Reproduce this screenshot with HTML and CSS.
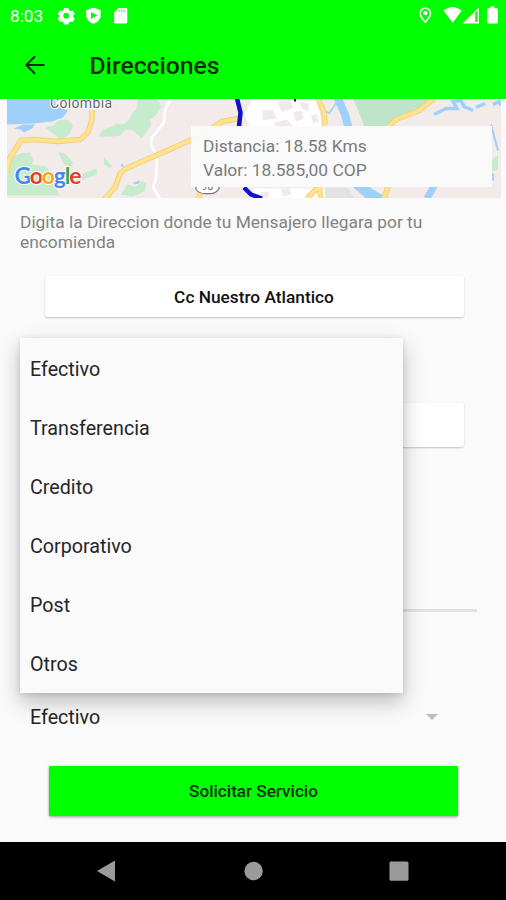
FILE: index.html
```html
<!DOCTYPE html>
<html lang="es">
<head>
<meta charset="utf-8">
<title>Direcciones</title>
<link rel="stylesheet" href="styles.css">
</head>
<body>
<div class="screen">
  <header class="top">
    <div class="status">
      <span class="clock">8:03</span>
      <svg class="status-left" width="72" height="18" viewBox="57 7 72 18" fill="#fff">
        <path fill-rule="evenodd" d="M64 8h4.400l.6 2.200 1.500.9 2.300-.7 2 3.500-1.500 1.600v1.500l1.500 1.600-2 3.500-2.300-.7-1.500.9-.6 2.100H64l-.6-2.100-1.500-.9-2.200.7-2-3.500 1.500-1.600v-1.500l-1.500-1.600 2-3.500 2.200.7 1.500-.9zM66.200 12.800a2.900 2.900 0 1 0 0 5.800 2.900 2.900 0 0 0 0-5.800z"/>
        <path fill-rule="evenodd" d="M93.400 7.400l7.300 2.800v5c0 4-3 7-7.300 8.600-4.300-1.600-7.300-4.600-7.300-8.600v-5zM91 12v7l6.500-3.700z"/>
        <path fill-rule="evenodd" d="M118.500 8h7.500q1.300 0 1.300 1.300v12.800q0 1.300-1.300 1.300h-10.700q-1.300 0-1.300-1.300v-9.600zM118.500 10v1.600h1.100v-1.600zm2.600 0v1.600h1.100v-1.600zm2.600 0v1.600h1.100v-1.600z"/>
      </svg>
      <svg class="status-right" width="84" height="20" viewBox="417 5 84 20" fill="#fff">
        <path fill-rule="evenodd" d="M425.300 7.300a6 6 0 0 1 6 6c0 3.600-3 6.800-6 10.200-3-3.400-6-6.600-6-10.200a6 6 0 0 1 6-6zm0 1.700a4.300 4.300 0 0 0-4.300 4.300c0 2.400 1.900 4.700 4.300 7.600 2.400-2.900 4.300-5.200 4.300-7.600a4.300 4.300 0 0 0-4.300-4.300z"/>
        <circle cx="425.300" cy="13.100" r="2.200"/>
        <path d="M443.500 10.800q9-7.600 18.200 0L452.700 22.700z"/>
        <path fill-rule="evenodd" d="M479 7.500v16h-16.500zM475.300 12.700v9.300h2.300V10.300z"/>
        <path d="M490.300 6.500h4.200v1.800h2.300q1.100 0 1.100 1.100v13q0 1.100-1.100 1.100h-8.600q-1.100 0-1.100-1.100v-13q0-1.100 1.100-1.100h2.100z"/>
      </svg>
    </div>
    <div class="appbar">
      <svg class="back" width="22" height="20" viewBox="0 0 22 20" fill="none" stroke="#042f04" stroke-width="2"><path d="M20.500 10H3M11 1.300L2.300 10l8.700 8.700"/></svg>
      <h1>Direcciones</h1>
    </div>
  </header>

  <main>
    <section class="map">
      <svg width="494" height="99" viewBox="7 98.500 494 99">
        <rect x="7" y="98" width="494" height="100" fill="#f2ebea"/>
        <path fill="#9fd0fa" d="M7 98h48l1 8 12 4-5 7-11 4-19 2-26 1z"/>
        <path fill="#9fd0fa" d="M14 128l9-4 12 0-3 4-8 4-4-3zM133 182l7-2-1 3-5 1zM120 165l3-2 1 4z"/>
        <g fill="#c7ebcd">
          <path d="M45 127l8-2 5-5 10-1 5 6-4 9-9 6-4-5z"/>
          <path d="M99 136l4-7 9-3 5-3 6 1 6-4 3-7 4-4 2-11h18l6 8-8 11-4 2 1 6-9 13-9-8-7-1-6 6-7 1z"/>
          <path d="M12 156l8-3 10-1 3 7-1 5 14 2 8 9 8 6-6 6 4 8H7v-34zM58 151l8 3 7 8-2 5-7-3zM75 176l22-8v6l-12 4-8 6zM104 156l8 10-1 2-7-4zM121 194l6-10 9 2 6-6 4 3-1 8-13 5z"/>
          <path fill="#bee5c7" d="M353 98h84l-43 23-1 6h-28l-6-15z"/>
          <path d="M491 159l7-4v14l-5 2-3-5z"/>
        </g>
        <path fill="#fff" d="M253 98h64l5 27-70 4-8-15zM253 188h70l8 10h-74z"/>
        <g fill="#f0eae9"><path d="M262 110l11-1 4 9-14 2zM278 101l13-1 2 8-12 3zM293 112l8-2 3 8-8 3zM274 122l13-3 7 8h-17zM299 101l9 2 1 8-7-3zM281 189l9-1 1 6-8 2zM260 192l10-1-2 6-6 1zM311 115l6-2 2 8-6 2z"/></g>
        <path fill="#e3e1e1" d="M325 187h22l9 12h-31z"/>
        <path fill="none" stroke="#fff" stroke-width="2.500" d="M171 98l-6 12-1 12-12 15-1 7 6 12-1 22-3 9 7 11"/>
        <g fill="none" stroke="#9fd0fa">
          <path stroke-width="8" d="M337 96l8 18 4 15"/>
          <path stroke-width="11" d="M357 183l12 10 12 7"/>
          <path stroke-width="7" d="M435 184l-8 14"/>
          <path stroke-width="1.500" d="M336 103l-7 10M326 111l4 2"/>
          <path stroke-width="3.500" d="M434 114l12-6 11 0-4-7 8-1 3 6 9 4M476 107l9-4M493 104l6-3 2 4"/>
          <path stroke-width="2" d="M491 124l7 26M493 173v7"/>
        </g>
        <g fill="none" stroke-linejoin="round">
          <g stroke="#f0cf78" stroke-width="5.500">
            <path d="M7 172l2-13 12-19 13-1 24 2 22-2 8-7 4-13v-9"/>
            <path d="M104 199l11-12 5-14 6-5 32-14 41-18 23-15 17-3M318 98l6 14 1 13M388 126l8-7 23-9 15-12M307 198l12-12 2 12M388 186l-4 12M198 198l4-9"/>
          </g>
          <g stroke="#ffe390" stroke-width="3.600">
            <path d="M7 172l2-13 12-19 13-1 24 2 22-2 8-7 4-13v-9"/>
            <path d="M104 199l11-12 5-14 6-5 32-14 41-18 23-15 17-3M318 98l6 14 1 13M388 126l8-7 23-9 15-12M307 198l12-12 2 12M388 186l-4 12M198 198l4-9"/>
          </g>
          <path stroke="#1111c9" stroke-width="4.500" d="M237 98l3.500 14-1.500 14M244 187l7 7 11 4"/>
        </g>
        <path d="M196 184v5q4 5 12 4 8 1 11-5v-4z" fill="#fff" stroke="#777" stroke-width="1.200"/>
        <text x="201" y="189" class="route">90</text>
        <path d="M294 98h2v3h-2z" fill="#111"/>
        <text x="50" y="107" class="city" textLength="62">Colombia</text>
        <text x="14.500" y="183.500" class="google" textLength="67"><tspan fill="#4285f4">G</tspan><tspan fill="#e53c30">o</tspan><tspan fill="#f4a814">o</tspan><tspan fill="#4285f4">g</tspan><tspan fill="#34a853">l</tspan><tspan fill="#e53c30">e</tspan></text>
      </svg>
      <div class="fare"><p class="dist">Distancia: 18.58 Kms</p><p class="cost">Valor: 18.585,00 COP</p></div>
    </section>

    <p class="hint">Digita la Direccion donde tu Mensajero llegara por tu encomienda</p>
    <button class="field place">Cc Nuestro Atlantico</button>
    <div class="field second"></div>
    <div class="rule"></div>

    <div class="spinner">
      <span class="item">Efectivo</span><i class="caret"></i>
      <ul class="menu">
        <li class="item">Efectivo</li>
        <li class="item">Transferencia</li>
        <li class="item">Credito</li>
        <li class="item">Corporativo</li>
        <li class="item">Post</li>
        <li class="item">Otros</li>
      </ul>
    </div>
    <button class="submit">Solicitar Servicio</button>
  </main>

  <nav class="nav">
    <svg width="506" height="58" viewBox="0 842 506 58" fill="#9b9b9b">
      <path d="M97 871l18-10.500v21z"/><circle cx="253.600" cy="871" r="9.200"/><rect x="389.500" y="861.500" width="19" height="19.300" rx="1.500"/>
    </svg>
  </nav>
</div>
</body>
</html>
```
FILE: styles.css
```css
* { box-sizing: border-box; margin: 0; padding: 0; }
body { font-family: Roboto, "Liberation Sans", sans-serif; background: #fafafa; }
.screen { width: 506px; height: 900px; display: flex; flex-direction: column; overflow: hidden; background: #fafafa; }

.top { height: 99px; flex: none; background: #00ff00; }
.status { height: 32px; display: flex; align-items: center; padding: 0 5px 0 10px; }
.clock { width: 47px; font-size: 17.2px; line-height: 32px; color: #fff; }
.status-right { margin-left: auto; margin-top: -2px; }
.appbar { height: 66px; display: flex; align-items: center; padding-left: 24px; }
.back { margin-right: 43.5px; }
h1 { font-size: 24.7px; font-weight: 500; line-height: 67px; color: #042f04; }

main { flex: 1; display: flex; flex-direction: column; }
.map { position: relative; width: 494px; height: 99px; margin-left: 7px; }
.map svg { display: block; }
.city { font-size: 14px; fill: #666; stroke: #fff; stroke-width: 2px; paint-order: stroke; }
.google { font-family: Lato, sans-serif; font-size: 23px; font-weight: 700; stroke: #fff; stroke-width: 2px; paint-order: stroke; }
.route { font-size: 11px; fill: #666; }
.fare { position: absolute; left: 184px; top: 27px; width: 301px; height: 61px; padding: 8px 12px; background: rgba(250, 250, 250, .97); color: #7a7a7a; font-size: 17.4px; line-height: 24px; white-space: nowrap; }

.hint { margin: 14px 20px 0; width: 430px; color: #828282; font-size: 17.35px; line-height: 20px; }
.field { width: 419px; margin-left: 44.5px; border: 0; border-radius: 3px; background: #fff; box-shadow: 0 1px 2px rgba(0, 0, 0, .22); }
.place { height: 41px; margin-top: 24px; padding-top: 1px; font: 500 17.3px/41px Roboto, sans-serif; color: #111; }
.second { height: 44px; margin-top: 86px; }
.rule { height: 3px; margin: 162px 29px 0 20px; background: #e2e2e2; }

.spinner { position: relative; height: 40px; margin: 85px 20px 0; padding: 0 10px; display: flex; align-items: center; justify-content: space-between; }
.item { font-size: 19.7px; color: #262626; white-space: nowrap; }
.caret { margin-right: 38px; border: 6px solid transparent; border-top-color: #bdbdbd; border-bottom: 0; }
.menu { position: absolute; left: 0; bottom: 44px; width: 382.5px; height: 355px; list-style: none; background: #fafafa; box-shadow: 0 9px 20px rgba(0, 0, 0, .25), 0 1px 5px rgba(0, 0, 0, .12); }
.menu .item { height: 59.1px; line-height: 63px; padding-left: 10px; }
.submit { width: 409px; height: 50px; margin: 29px 0 0 49px; border: 0; border-radius: 1px; background: #00ff00; color: #042f04; font: 500 17.1px/50px Roboto, sans-serif; box-shadow: 0 1px 3px rgba(0, 0, 0, .4); }

.nav { height: 58px; flex: none; background: #000; }
.nav svg { display: block; }
```
